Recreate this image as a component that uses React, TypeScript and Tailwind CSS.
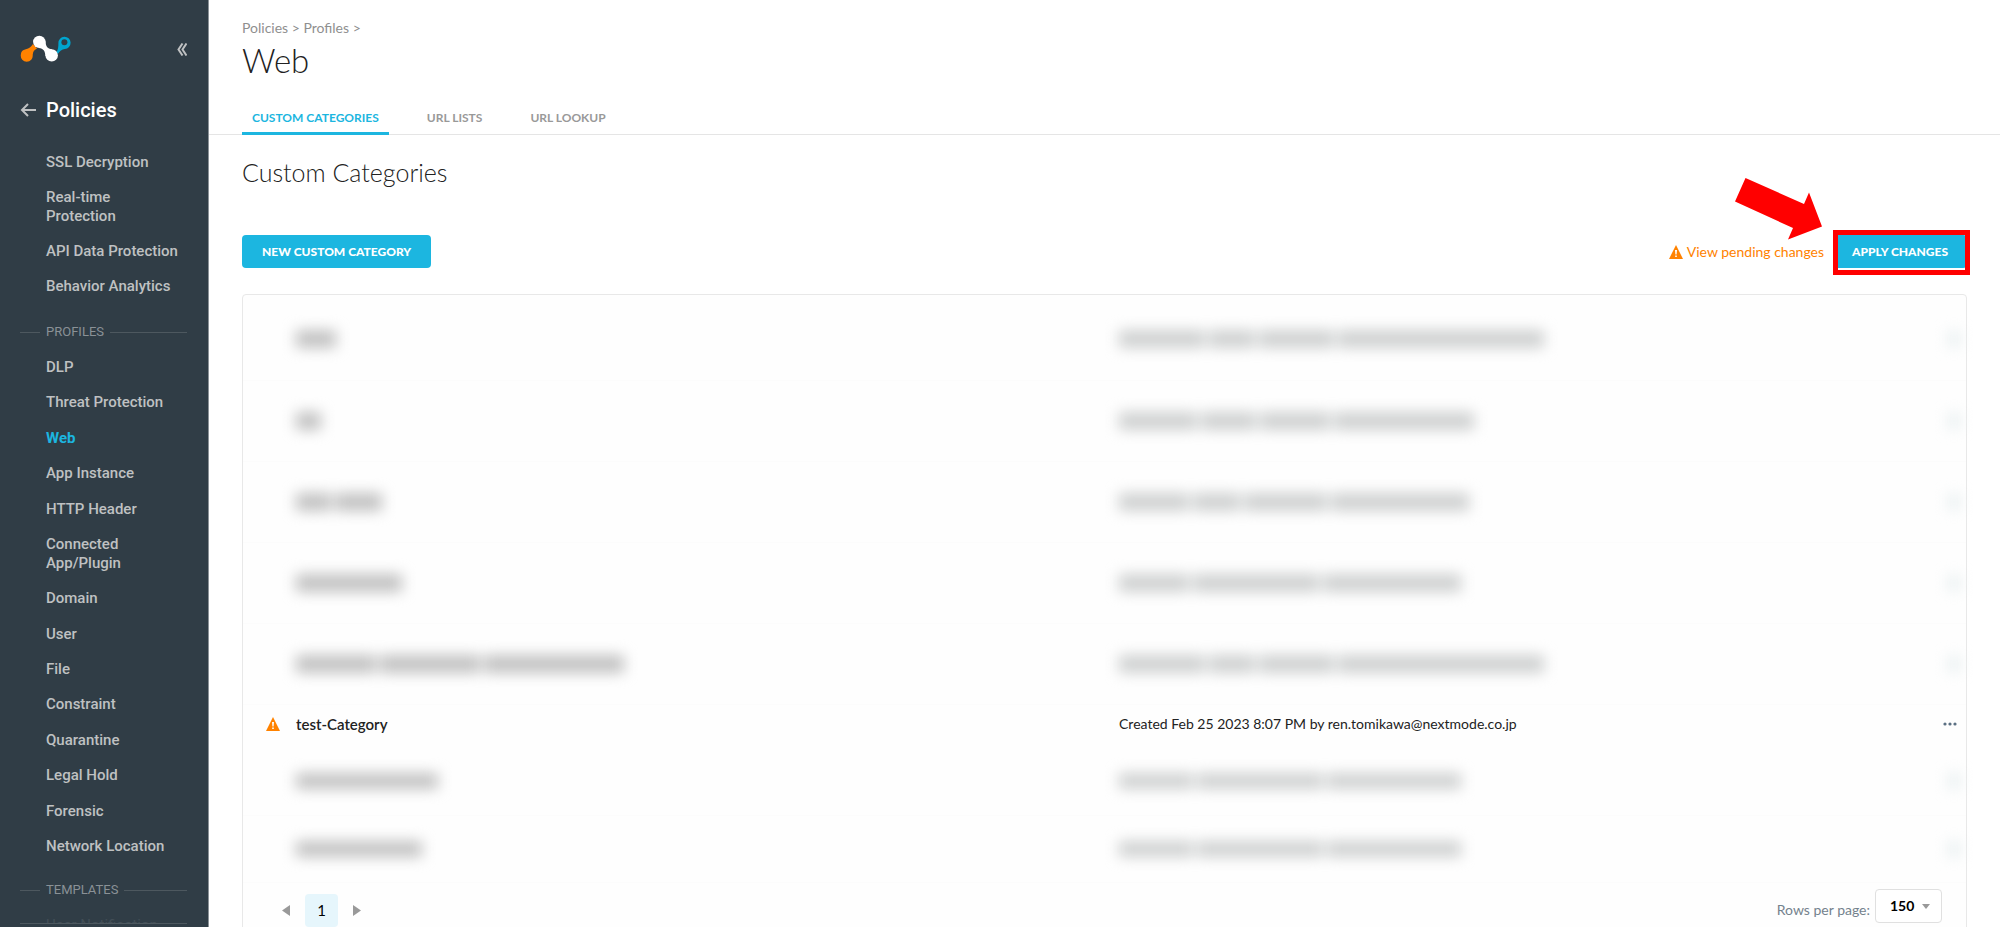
import React, { useState } from 'react';

const policyLinks = ['SSL Decryption', 'Real-time\nProtection', 'API Data Protection', 'Behavior Analytics'];

const profileLinks = [
  'DLP',
  'Threat Protection',
  'Web',
  'App Instance',
  'HTTP Header',
  'Connected\nApp/Plugin',
  'Domain',
  'User',
  'File',
  'Constraint',
  'Quarantine',
  'Legal Hold',
  'Forensic',
  'Network Location',
];

const tabs = ['CUSTOM CATEGORIES', 'URL LISTS', 'URL LOOKUP'];

// widths of the obscured words, in pixels
const hiddenTop = [
  { name: [40], detail: [86, 46, 75, 206] },
  { name: [25], detail: [78, 55, 70, 140] },
  { name: [35, 47], detail: [70, 47, 83, 138] },
  { name: [106], detail: [70, 126, 138] },
  { name: [80, 100, 140], detail: [86, 46, 75, 206] },
];

const hiddenBottom = [
  { name: [142], detail: [74, 126, 134] },
  { name: [126], detail: [74, 126, 134] },
];

const Logo = () => (
  <svg width="51" height="30" viewBox="0 0 51 30" aria-label="Home">
    <path
      d="M0.800 21a6 6 0 0 1 5-5.800c3.500-.7 5-2.200 7.200-5.200l4 4.500c-3 1.500-4 3-4.300 6.500a6 6 0 1 1-11.900 0z"
      fill="#ff8200"
    />
    <path
      d="M36 18.500c2.300-2.500 2.400-5.500 2.400-9.500a6.100 6.100 0 1 1 6.400 5.900c-3 .3-5 2-6.500 4.600z"
      fill="#00a5cf"
    />
    <circle cx="44.400" cy="8.200" r="3" fill="#303d46" />
    <circle cx="19.300" cy="7.900" r="6.200" fill="#fff" />
    <circle cx="31.700" cy="21.400" r="6.200" fill="#fff" />
    <path d="M25.500 7c.3 5.500 1.600 7.600 6.700 8.200l-6.700 7c-.5-5.500-2-7.600-6.700-8.200z" fill="#fff" />
  </svg>
);

const WarningIcon = () => (
  <svg width="14" height="14" viewBox="0 0 14 14" className="shrink-0" aria-hidden="true">
    <path d="M7 0L14 14H0z" fill="#ff8200" />
    <path d="M6 5h2l-.4 4.500H6.400zM6.200 10.500h1.600v1.600H6.200z" fill="#fff" />
  </svg>
);

const NavLink = ({ label }: { label: string }) => (
  <li>
    <a
      href="#"
      className={
        label === 'Web'
          ? 'block font-bold text-[#1cb6e0]'
          : 'block font-medium whitespace-pre-line text-[#bfc1c2] hover:text-white'
      }
    >
      {label}
    </a>
  </li>
);

const NavHeading = ({ label }: { label: string }) => (
  <div className="flex items-center text-[13px] leading-5 text-[#8a9196]">
    <span className="h-px w-5 bg-[#4d585f]" />
    <h3 className="px-[6px]">{label}</h3>
    <span className="h-px flex-1 bg-[#4d585f]" />
  </div>
);

const Obscured = ({ words, className }: { words: number[]; className: string }) => (
  <div className="flex gap-1 blur-[7px]" aria-hidden="true">
    {words.map((width, i) => (
      <span key={i} className={className} style={{ width }} />
    ))}
  </div>
);

const HiddenRow = ({ row, tall }: { row: { name: number[]; detail: number[] }; tall?: boolean }) => (
  <tr className={tall ? 'h-[81px] border-b border-[#fcfcfc]' : 'h-[67px] border-b border-[#fcfcfc]'}>
    <td />
    <td className="pl-1">
      <Obscured words={row.name} className={tall ? 'h-[18px] bg-[#c2c2c2]' : 'h-4 bg-[#c2c2c2]'} />
    </td>
    <td>
      <Obscured words={row.detail} className={tall ? 'h-[18px] bg-[#cfd1d1]' : 'h-4 bg-[#cfd1d1]'} />
    </td>
    <td>
      <div className="mr-[6px] ml-auto h-4 w-3 bg-[#e9f0f1] blur-[7px]" />
    </td>
  </tr>
);

const Sidebar = () => (
  <aside className="flex h-full w-[209px] shrink-0 flex-col border-r border-[#8b9297] bg-[#303d46] pr-[21px] pl-5 font-['Roboto',sans-serif] text-[15px] leading-[19px]">
    <div className="flex items-center justify-between pt-[34px]">
      <Logo />
      <button aria-label="Collapse menu" className="text-[#bfc1c2]">
        <svg width="11" height="13" viewBox="0 0 11 13" fill="none" stroke="currentColor" strokeWidth="2">
          <path d="M6.500 0.500L2.500 6.500L6.500 12.500M10.500 0.500L6.500 6.500L10.500 12.500" />
        </svg>
      </button>
    </div>
    <div className="mt-[34px] flex items-center gap-[10px]">
      <button aria-label="Back" className="text-[#bfc1c2]">
        <svg width="16" height="16" viewBox="0 0 16 16" fill="none" stroke="currentColor" strokeWidth="2">
          <path d="M8 2L2 8L8 14M2 8H16" />
        </svg>
      </button>
      <h2 className="text-xl leading-6 font-medium text-white">Policies</h2>
    </div>
    <nav className="mt-[31px] flex min-h-0 flex-1 flex-col">
      <ul className="flex flex-col gap-4 pl-[26px]">
        {policyLinks.map((label) => (
          <NavLink key={label} label={label} />
        ))}
      </ul>
      <div className="mt-[26px]">
        <NavHeading label="PROFILES" />
      </div>
      <ul className="mt-4 flex flex-1 flex-col justify-between pl-[26px]">
        {profileLinks.map((label) => (
          <NavLink key={label} label={label} />
        ))}
      </ul>
      <div className="mt-6">
        <NavHeading label="TEMPLATES" />
      </div>
    </nav>
    <div className="mt-4 h-[7px] overflow-hidden pl-[26px] text-[#424e56]">User Notification</div>
    <div className="h-1 border-t border-[#4d585f]" />
  </aside>
);

const App = () => {
  const [activeTab, setActiveTab] = useState('CUSTOM CATEGORIES');
  const [pageSize, setPageSize] = useState('150');

  return (
    <div className="flex h-screen overflow-hidden bg-white font-['Lato',sans-serif] text-[#222]">
      <Sidebar />
      <main className="min-w-0 flex-1">
        <header className="border-b border-[#e5e5e5] px-[33px] pt-[18px]">
          <div className="text-sm leading-5 text-[#8f8f8f]">
            <a href="#">Policies</a> &gt; <a href="#">Profiles</a> &gt;
          </div>
          <h1 className="mt-[2px] text-[33px] leading-10 font-light">Web</h1>
          <div className="mt-6 -mb-px flex gap-7" role="tablist">
            {tabs.map((tab) => (
              <button
                key={tab}
                role="tab"
                aria-selected={tab === activeTab}
                onClick={() => setActiveTab(tab)}
                className={
                  tab === activeTab
                    ? 'border-b-3 border-[#1cb6e0] px-[10px] py-1 text-xs leading-5 font-bold text-[#1cb6e0]'
                    : 'border-b-3 border-transparent px-[10px] py-1 text-xs leading-5 font-bold text-[#999]'
                }
              >
                {tab}
              </button>
            ))}
          </div>
        </header>

        <section className="px-[33px] pt-[19px]">
          <h2 className="text-[25px] leading-9 font-light">Custom Categories</h2>

          <div className="mt-[45px] flex items-center justify-between">
            <button className="h-[33px] rounded bg-[#1cb6e0] px-5 text-xs font-black text-white">
              NEW CUSTOM CATEGORY
            </button>
            <div className="flex items-center">
              <a href="#" className="flex items-center gap-1 text-sm text-[#ff8200]">
                <WarningIcon />
                View pending changes
              </a>
              <div className="relative ml-[9px]">
                <button className="block h-[33px] rounded bg-[#1cb6e0] px-[19px] text-xs font-black text-white">
                  APPLY CHANGES
                </button>
                <span className="pointer-events-none absolute -top-[5px] -right-[3px] -bottom-[7px] left-0 border-5 border-[#ff0000]" />
                <svg
                  className="pointer-events-none absolute -top-[57px] right-[145px]"
                  width="87"
                  height="62"
                  viewBox="0 0 87 62"
                  aria-hidden="true"
                >
                  <path d="M10.500 0L69 26L74 14.500L87 48.500L53 61.500L58 50L0 23.500z" fill="#ff0000" />
                </svg>
              </div>
            </div>
          </div>

          <div className="mt-[26px] rounded border border-[#e8e8e8] bg-[#fefefe] pt-1">
            <table className="w-full table-fixed text-sm">
              <colgroup>
                <col className="w-[49px]" />
                <col className="w-[48%]" />
                <col />
                <col className="w-[34px]" />
              </colgroup>
              <tbody>
                {hiddenTop.map((row, i) => (
                  <HiddenRow key={i} row={row} tall />
                ))}
                <tr className="h-11">
                  <td className="pb-1 pl-[23px]">
                    <WarningIcon />
                  </td>
                  <td className="pb-1 pl-1 text-[15px] font-semibold">test-Category</td>
                  <td className="pb-1">Created Feb 25 2023 8:07 PM by ren.tomikawa@nextmode.co.jp</td>
                  <td className="pb-1">
                    <button aria-label="More actions" className="block h-5 pl-[11px]">
                      <svg width="14" height="4" viewBox="0 0 14 4" fill="#5b7083">
                        <circle cx="2" cy="2" r="1.600" />
                        <circle cx="7" cy="2" r="1.600" />
                        <circle cx="12" cy="2" r="1.600" />
                      </svg>
                    </button>
                  </td>
                </tr>
                {hiddenBottom.map((row, i) => (
                  <HiddenRow key={i} row={row} />
                ))}
              </tbody>
            </table>

            <div className="flex items-start justify-between pt-[6px] pr-6 pb-8 pl-[39px]">
              <div className="mt-[5px] flex items-center gap-[15px] text-[15px]">
                <button aria-label="Previous page">
                  <svg width="8" height="11" viewBox="0 0 8 11" fill="#999">
                    <path d="M8 0V11L0 5.500z" />
                  </svg>
                </button>
                <button className="size-[33px] rounded bg-[#e6f6fc] text-black">1</button>
                <button aria-label="Next page">
                  <svg width="8" height="11" viewBox="0 0 8 11" fill="#999">
                    <path d="M0 0V11L8 5.500z" />
                  </svg>
                </button>
              </div>
              <div className="flex items-center gap-[5px]">
                <label htmlFor="page-size" className="pt-2 text-sm text-[#74828d]">
                  Rows per page:
                </label>
                <div className="relative">
                  <select
                    id="page-size"
                    value={pageSize}
                    onChange={(e) => setPageSize(e.target.value)}
                    className="block h-[34px] w-[67px] appearance-none rounded border border-[#e0e0e0] bg-white pl-[14px] text-sm font-bold text-black"
                  >
                    <option>50</option>
                    <option>100</option>
                    <option>150</option>
                  </select>
                  <svg
                    className="pointer-events-none absolute top-[15px] right-3"
                    width="8"
                    height="5"
                    viewBox="0 0 8 5"
                    fill="#999"
                  >
                    <path d="M0 0H8L4 5z" />
                  </svg>
                </div>
              </div>
            </div>
          </div>
        </section>
      </main>
    </div>
  );
};

export default App;
